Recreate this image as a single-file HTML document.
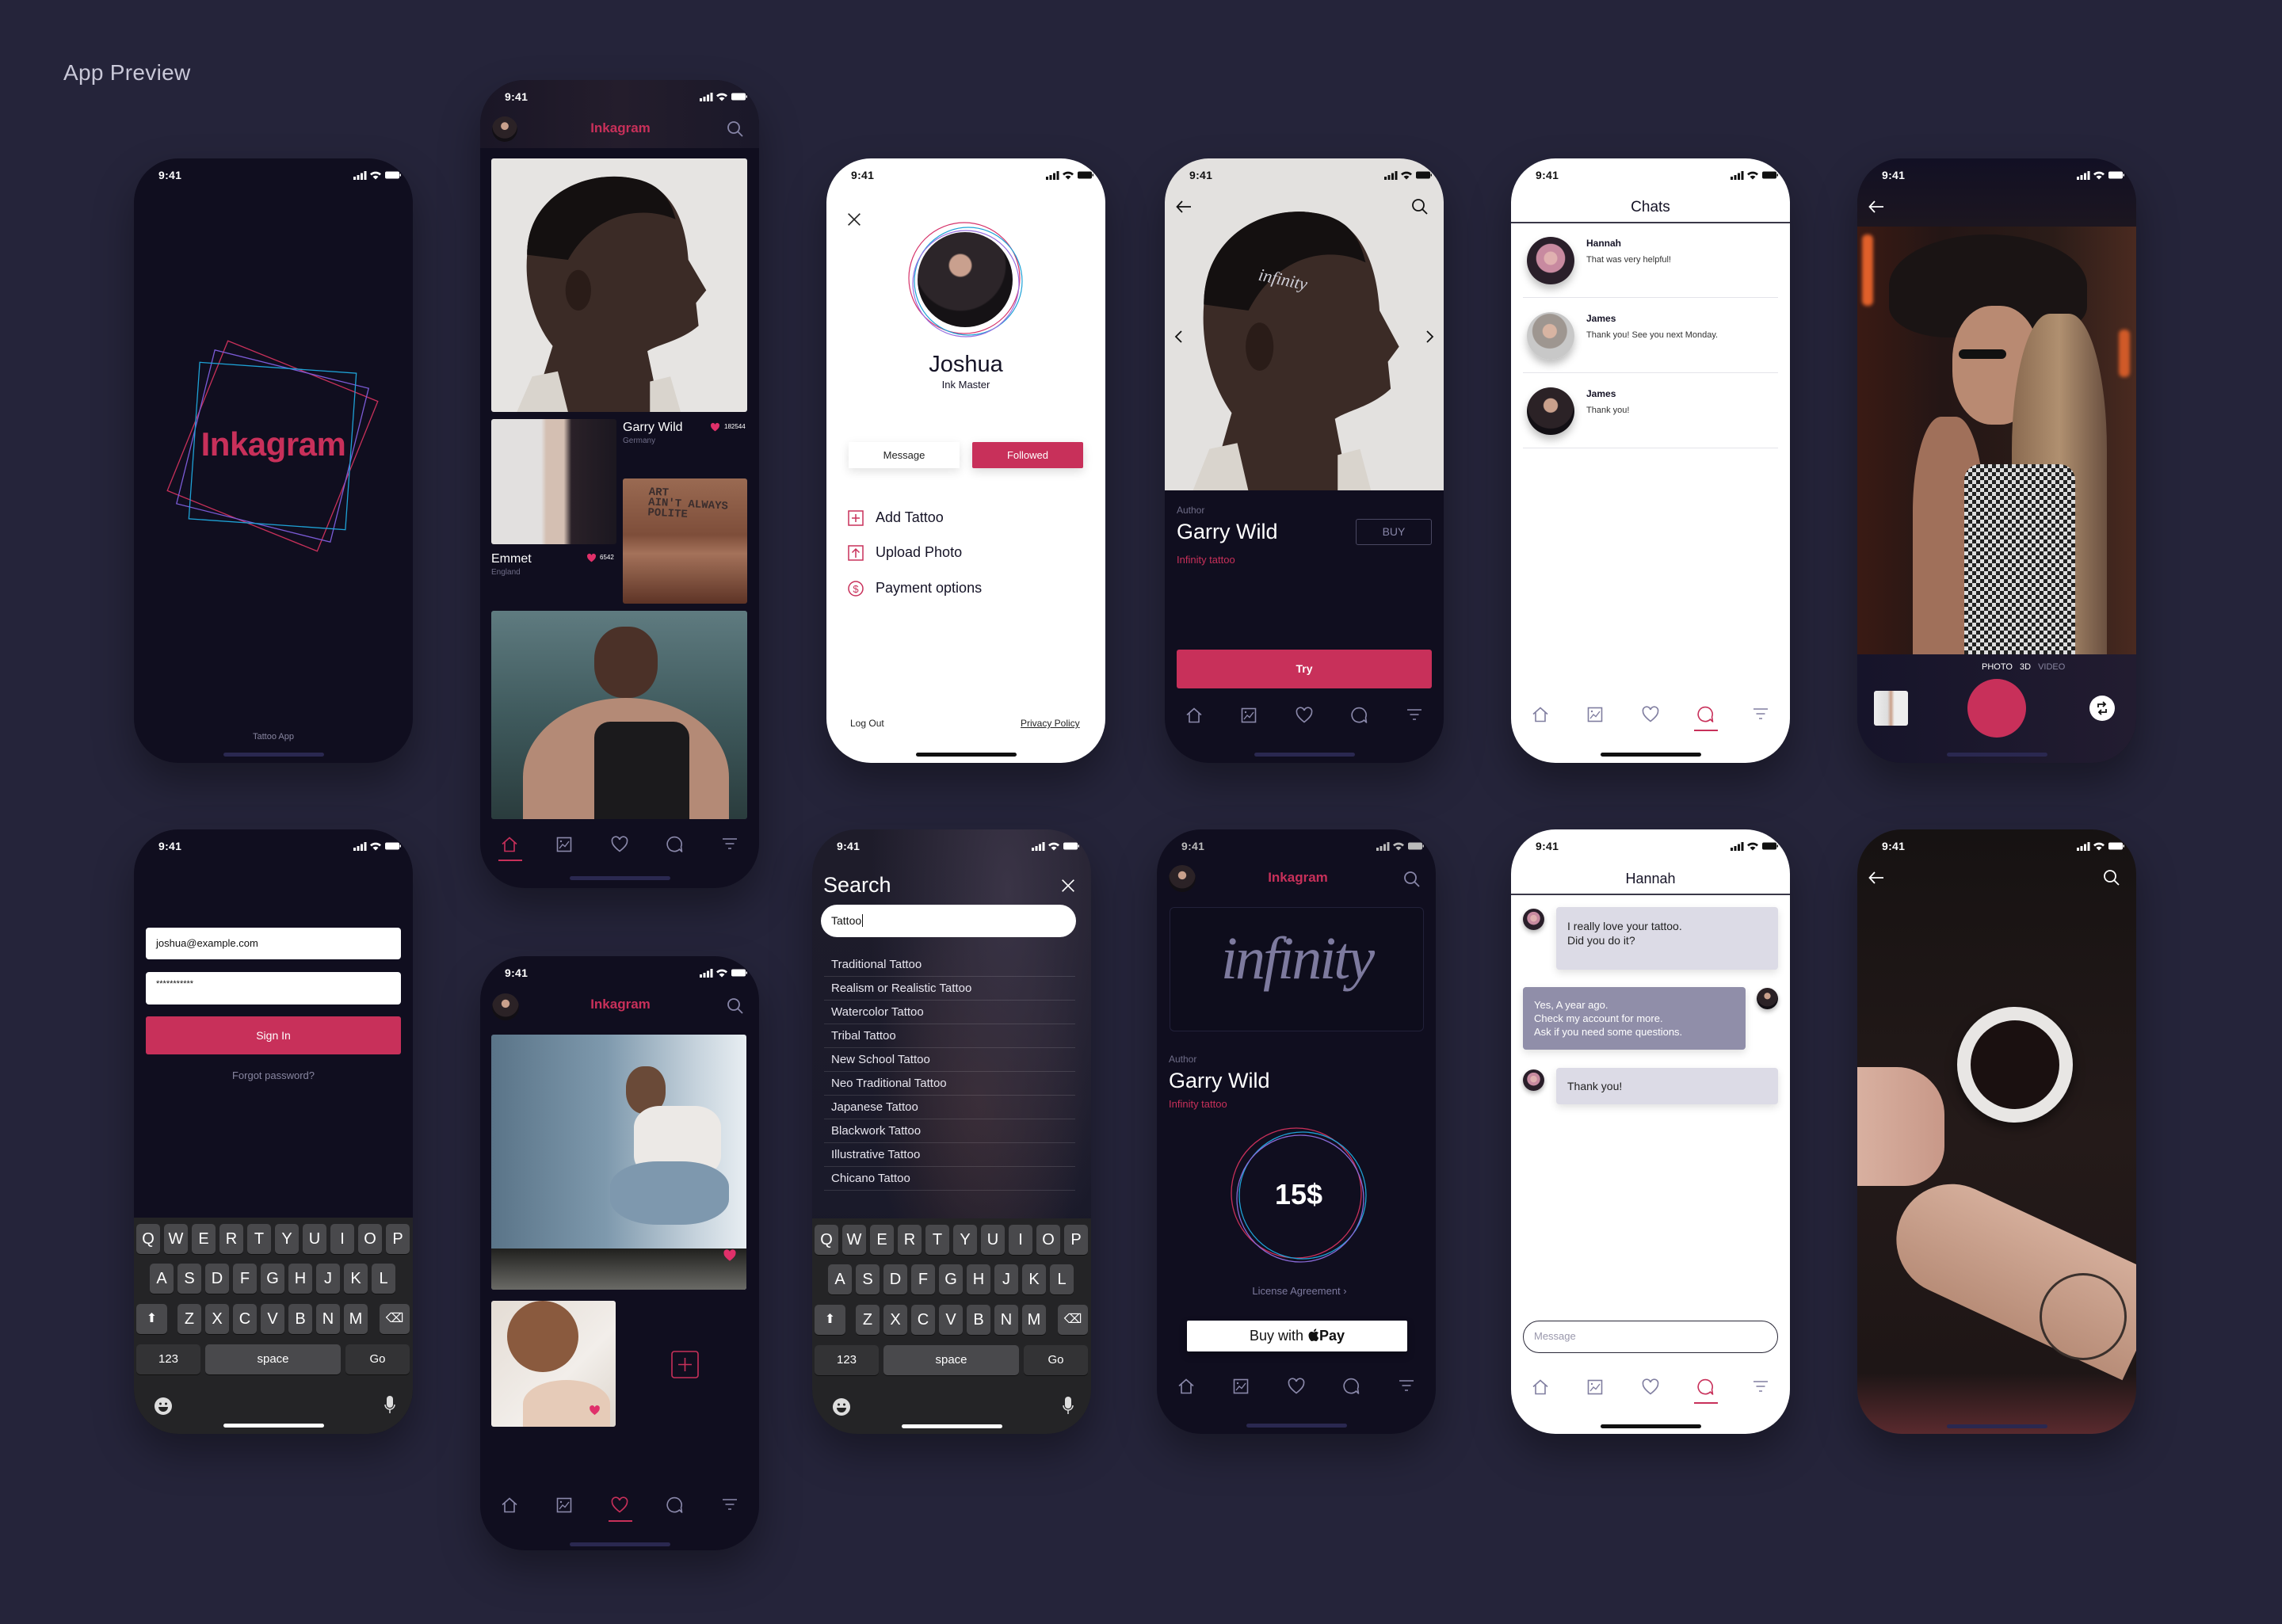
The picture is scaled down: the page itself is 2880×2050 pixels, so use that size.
<!DOCTYPE html>
<html><head><meta charset="utf-8">
<style>
*{margin:0;padding:0;box-sizing:border-box}
body{width:2880px;height:2050px;background:#25243a;font-family:"Liberation Sans",sans-serif;position:relative;overflow:hidden}
.ph{position:absolute;width:352px;height:763px;border-radius:56px;overflow:hidden;background:#100e1f;box-shadow:0 24px 50px rgba(0,0,0,.35)}
.a{position:absolute}
.st{position:absolute;left:31px;top:13px;font-size:14px;font-weight:bold;color:#fff;letter-spacing:.3px}
.st.dk{color:#111}
.sti{position:absolute;right:15px;top:15px;width:60px;height:12px}
.nav{position:absolute;left:0;width:352px;height:26px}
.nav svg{position:absolute;width:24px;height:24px;top:0}
.hi{position:absolute;left:113px;width:127px;height:5px;border-radius:3px;background:#2a2850}
.logo{color:#c8305a;font-weight:bold;font-size:17px;position:absolute;width:200px;text-align:center;left:77px}
.av{position:absolute;border-radius:50%;background:radial-gradient(circle at 50% 38%,#c9a08c 0 18%,#2b2226 20% 60%,#120f14 62%)}
.kb{position:absolute;left:0;width:352px;background:#242426}
.k{position:absolute;height:38px;border-radius:5px;background:#49494c;color:#fff;font-size:20px;text-align:center;line-height:38px;box-shadow:0 1px 0 #111}
.k.s{font-size:15px}
.li{position:absolute;left:15px;width:317px;height:30px;border-bottom:1px solid rgba(255,255,255,.12);color:#e8e6ef;font-size:15px;padding-left:9px;line-height:30px}
.bub{position:absolute;border-radius:4px;font-size:14px;line-height:18px;box-shadow:0 4px 10px rgba(0,0,0,.12)}
</style></head><body>
<svg width="0" height="0" style="position:absolute">
<defs>
<symbol id="sb" viewBox="0 0 60 12"><rect x="0" y="8" width="3" height="4" fill="currentColor"/><rect x="4.5" y="6" width="3" height="6" fill="currentColor"/><rect x="9" y="3.5" width="3" height="8.5" fill="currentColor"/><rect x="13.5" y="1" width="3" height="11" fill="currentColor"/><path d="M21 4.5 A10 10 0 0 1 35 4.5 L33 6.5 A7 7 0 0 0 23 6.5Z M24.5 8 A5 5 0 0 1 31.5 8 L28 11.5Z" fill="currentColor"/><rect x="40" y="1.5" width="18" height="9" rx="2" fill="currentColor"/><rect x="58.5" y="4.5" width="1.5" height="3" fill="currentColor"/></symbol>
<symbol id="home" viewBox="0 0 24 24"><path d="M3 11.5 L12 3.5 L21 11.5 M6 9 V20.5 H18 V9" fill="none" stroke="currentColor" stroke-width="1.6"/></symbol>
<symbol id="img" viewBox="0 0 24 24"><rect x="3.5" y="3.5" width="17" height="17" fill="none" stroke="currentColor" stroke-width="1.6"/><path d="M6 17 L10 12 L13 14.5 L18 8" fill="none" stroke="currentColor" stroke-width="1.4"/><circle cx="8" cy="8" r="1.2" fill="currentColor"/></symbol>
<symbol id="heart" viewBox="0 0 24 24"><path d="M12 20.5 C5 15 2.5 11.5 2.5 8 A4.8 4.8 0 0 1 12 6 A4.8 4.8 0 0 1 21.5 8 C21.5 11.5 19 15 12 20.5Z" fill="none" stroke="currentColor" stroke-width="1.6"/></symbol>
<symbol id="chat" viewBox="0 0 24 24"><path d="M18.5 18 A9 9 0 1 1 20.5 15 L21.5 21 Z" fill="none" stroke="currentColor" stroke-width="1.6" stroke-linejoin="round"/></symbol>
<symbol id="filt" viewBox="0 0 24 24"><path d="M3 5 H21 M6.5 11 H17.5 M10 17 H14" fill="none" stroke="currentColor" stroke-width="1.6"/></symbol>
<symbol id="srch" viewBox="0 0 24 24"><circle cx="10" cy="10" r="7" fill="none" stroke="currentColor" stroke-width="1.8"/><path d="M15 15 L21 21" stroke="currentColor" stroke-width="1.8"/></symbol>
<symbol id="back" viewBox="0 0 24 24"><path d="M21 12 H4 M10 5 L3.5 12 L10 19" fill="none" stroke="currentColor" stroke-width="1.8"/></symbol>
<symbol id="x" viewBox="0 0 24 24"><path d="M4 4 L20 20 M20 4 L4 20" stroke="currentColor" stroke-width="1.8"/></symbol>
<symbol id="hf" viewBox="0 0 24 24"><path d="M12 21 C5 15.5 2 12 2 8 A5 5 0 0 1 12 5.5 A5 5 0 0 1 22 8 C22 12 19 15.5 12 21Z" fill="currentColor"/></symbol>
<symbol id="emo" viewBox="0 0 24 24"><circle cx="12" cy="12" r="11" fill="#ddd"/><circle cx="8.5" cy="9" r="1.5" fill="#222"/><circle cx="15.5" cy="9" r="1.5" fill="#222"/><path d="M6 13 H18 A6 6 0 0 1 6 13Z" fill="#222"/></symbol>
<symbol id="man" viewBox="0 0 100 100" preserveAspectRatio="none"><path d="M14 38 C14 14 38 4 56 8 C70 11 76 24 77 40 L84 52 L80 57 L81 66 C74 72 66 73 61 76 L66 100 L16 100 L24 74 C16 64 13 50 14 38Z" fill="#3b2b26"/><path d="M14 38 C14 14 38 4 56 8 C66 10 70 16 72 24 C58 18 40 22 30 40 Z" fill="#141010"/><path d="M10 100 L16 86 L26 84 L30 100Z M62 100 L62 88 L70 86 L74 100Z" fill="#d9d4cd"/><ellipse cx="34" cy="52" rx="5" ry="8" fill="#2a1c18"/></symbol>
</defs></svg>

<div class="a" style="left:80px;top:76px;font-size:28px;color:#c9c8d8;letter-spacing:.3px">App Preview</div>

<!-- P1 splash -->
<div class="ph" style="left:169px;top:200px">
 <div class="st">9:41</div><svg class="sti" style="color:#fff"><use href="#sb"/></svg>
 <svg class="a" style="left:40px;top:228px" width="270" height="270" viewBox="0 0 270 270">
  <g fill="none" stroke-width="1.3">
   <rect x="33" y="33" width="204" height="204" stroke="#c8305a" transform="rotate(22 135 135)"/>
   <rect x="35" y="35" width="200" height="200" stroke="#7b5bd6" transform="rotate(14 135 135)"/>
   <rect x="36" y="36" width="198" height="198" stroke="#1ea2d6" transform="rotate(4 135 135)"/>
  </g></svg>
 <div class="a" style="left:0;width:352px;top:337px;text-align:center;font-size:42px;font-weight:bold;color:#c8305a;letter-spacing:-.5px">Inkagram</div>
 <div class="a" style="left:0;width:352px;top:724px;text-align:center;font-size:11px;color:#8886a0">Tattoo App</div>
 <div class="hi" style="top:750px"></div>
</div>

<!-- P2 feed -->
<div class="ph" style="left:606px;top:101px;height:1020px">
 <div class="a" style="left:0;top:0;width:352px;height:86px;background:linear-gradient(90deg,#1a1626,#241d2c 50%,#1a1829)"></div>
 <div class="st">9:41</div><svg class="sti" style="color:#fff"><use href="#sb"/></svg>
 <div class="av" style="left:15px;top:46px;width:32px;height:32px"></div>
 <div class="logo" style="top:51px">Inkagram</div>
 <svg class="a" style="left:310px;top:50px;width:24px;height:24px;color:#8886a8"><use href="#srch"/></svg>
 <div class="a" style="left:14px;top:99px;width:323px;height:320px;background:#e6e4e2;border-radius:3px;overflow:hidden"><svg style="width:100%;height:100%"><use href="#man"/></svg></div>
 <div class="a" style="left:14px;top:428px;width:158px;height:158px;background:linear-gradient(90deg,#e2e0df 0 40%,#d4bfb2 44% 58%,#2a2128 64%,#1b1720);border-radius:3px"></div>
 <div class="a" style="left:180px;top:430px;color:#fff;font-size:16px">Garry Wild</div>
 <div class="a" style="left:180px;top:450px;color:#6f6d88;font-size:10px">Germany</div>
 <svg class="a" style="left:290px;top:432px;width:13px;height:13px;color:#e0306a"><use href="#hf"/></svg>
 <div class="a" style="left:308px;top:433px;color:#fff;font-size:8px">182544</div>
 <div class="a" style="left:180px;top:503px;width:157px;height:158px;border-radius:3px;background:linear-gradient(180deg,#9a6a52,#7e4e3a 45%,#a4725a 60%,#5e3426);overflow:hidden">
  <div style="position:absolute;left:32px;top:14px;font:bold 14px 'Liberation Mono',monospace;color:#3a2d2d;line-height:13px;transform:rotate(3deg)">ART<br>AIN'T ALWAYS<br>POLITE</div></div>
 <div class="a" style="left:14px;top:596px;color:#fff;font-size:16px">Emmet</div>
 <div class="a" style="left:14px;top:616px;color:#6f6d88;font-size:10px">England</div>
 <svg class="a" style="left:134px;top:597px;width:13px;height:13px;color:#e0306a"><use href="#hf"/></svg>
 <div class="a" style="left:151px;top:598px;color:#fff;font-size:8px">6542</div>
 <div class="a" style="left:14px;top:670px;width:323px;height:263px;border-radius:3px;background:linear-gradient(180deg,#5f7b80,#3f5a5d 50%,#2a3c3d);overflow:hidden">
  <div style="position:absolute;left:130px;top:20px;width:80px;height:90px;border-radius:45%;background:#4b3128"></div>
  <div style="position:absolute;left:40px;top:110px;width:260px;height:200px;border-radius:50% 50% 0 0;background:#b48a76"></div>
  <div style="position:absolute;left:130px;top:140px;width:120px;height:130px;background:#1b1a1c;border-radius:20px 20px 0 0"></div>
 </div>
 <div class="nav" style="top:953px;color:#8b89ab">
  <svg style="left:25px;color:#c8305a"><use href="#home"/></svg><div class="a" style="left:23px;top:31px;width:30px;height:2px;background:#c8305a"></div>
  <svg style="left:94px"><use href="#img"/></svg><svg style="left:164px"><use href="#heart"/></svg><svg style="left:233px"><use href="#chat"/></svg><svg style="left:303px"><use href="#filt"/></svg>
 </div>
 <div class="hi" style="top:1005px"></div>
</div>

<!-- P3 profile -->
<div class="ph" style="left:1043px;top:200px;background:#fff">
 <div class="st dk">9:41</div><svg class="sti" style="color:#111"><use href="#sb"/></svg>
 <svg class="a" style="left:24px;top:66px;width:22px;height:22px;color:#222"><use href="#x"/></svg>
 <div class="a" style="left:115px;top:93px;width:120px;height:120px;border-radius:50%;background:radial-gradient(circle at 45% 35%,#c9a08e 0 13%,#2c2529 15% 55%,#151215 57%)"></div>
 <svg class="a" style="left:101px;top:79px" width="150" height="150"><g fill="none" stroke-width="1.2"><circle cx="73" cy="72" r="70" stroke="#d6336a"/><circle cx="78" cy="76" r="68" stroke="#1ea2d6"/><circle cx="75" cy="79" r="67" stroke="#9a70e0"/></g></svg>
 <div class="a" style="left:0;width:352px;top:244px;text-align:center;font-size:29px;color:#151326">Joshua</div>
 <div class="a" style="left:0;width:352px;top:278px;text-align:center;font-size:13px;color:#151326">Ink Master</div>
 <div class="a" style="left:28px;top:358px;width:140px;height:33px;background:#fff;box-shadow:0 4px 12px rgba(0,0,0,.12);text-align:center;line-height:33px;font-size:13px;color:#222">Message</div>
 <div class="a" style="left:184px;top:358px;width:140px;height:33px;background:#c8305a;border-radius:2px;box-shadow:0 4px 12px rgba(0,0,0,.15);text-align:center;line-height:33px;font-size:13px;color:#fff">Followed</div>
 <svg class="a" style="left:27px;top:444px" width="20" height="20"><rect x="1" y="1" width="18" height="18" fill="none" stroke="#c8305a" stroke-width="1.5"/><path d="M10 5 V15 M5 10 H15" stroke="#c8305a" stroke-width="1.5"/></svg>
 <div class="a" style="left:62px;top:443px;font-size:18px;color:#151326">Add Tattoo</div>
 <svg class="a" style="left:27px;top:488px" width="20" height="20"><rect x="1" y="1" width="18" height="18" fill="none" stroke="#c8305a" stroke-width="1.5"/><path d="M10 16 V5 M5.5 9.5 L10 5 L14.5 9.5" fill="none" stroke="#c8305a" stroke-width="1.5"/></svg>
 <div class="a" style="left:62px;top:487px;font-size:18px;color:#151326">Upload Photo</div>
 <svg class="a" style="left:27px;top:533px" width="20" height="20"><circle cx="10" cy="10" r="9" fill="none" stroke="#c8305a" stroke-width="1.5"/><text x="10" y="15" text-anchor="middle" font-size="13" fill="#c8305a" font-family="Liberation Sans">$</text></svg>
 <div class="a" style="left:62px;top:532px;font-size:18px;color:#151326">Payment options</div>
 <div class="a" style="left:30px;top:706px;font-size:12px;color:#222">Log Out</div>
 <div class="a" style="left:245px;top:706px;font-size:12px;color:#222;text-decoration:underline">Privacy Policy</div>
 <div class="hi" style="top:750px;background:#111"></div>
</div>

<!-- P4 detail -->
<div class="ph" style="left:1470px;top:200px">
 <div class="a" style="left:0;top:0;width:352px;height:419px;background:#e3e1df;overflow:hidden"><svg style="position:absolute;left:0;top:40px;width:352px;height:380px"><use href="#man"/></svg>
  <div class="a" style="left:118px;top:140px;font:italic 22px 'Liberation Serif',serif;color:#cfcfd8;transform:rotate(12deg)">infinity</div></div>
 <div class="st dk">9:41</div><svg class="sti" style="color:#111"><use href="#sb"/></svg>
 <svg class="a" style="left:12px;top:49px;width:24px;height:24px;color:#111"><use href="#back"/></svg>
 <svg class="a" style="left:310px;top:49px;width:24px;height:24px;color:#111"><use href="#srch"/></svg>
 <svg class="a" style="left:10px;top:215px" width="14" height="20"><path d="M11 3 L4 10 L11 17" fill="none" stroke="#111" stroke-width="1.8"/></svg>
 <svg class="a" style="left:328px;top:215px" width="14" height="20"><path d="M3 3 L10 10 L3 17" fill="none" stroke="#111" stroke-width="1.8"/></svg>
 <div class="a" style="left:15px;top:437px;font-size:12px;color:#6f6d88">Author</div>
 <div class="a" style="left:15px;top:456px;font-size:27px;color:#fff">Garry Wild</div>
 <div class="a" style="left:15px;top:499px;font-size:13px;color:#c8305a">Infinity tattoo</div>
 <div class="a" style="left:241px;top:455px;width:96px;height:33px;border:1.5px solid #4a4862;border-radius:3px;text-align:center;line-height:30px;font-size:14px;color:#8886a8">BUY</div>
 <div class="a" style="left:15px;top:620px;width:322px;height:49px;background:#c8305a;border-radius:3px;text-align:center;line-height:49px;font-size:14px;font-weight:bold;color:#fff">Try</div>
 <div class="nav" style="top:691px;color:#8b89ab">
  <svg style="left:25px"><use href="#home"/></svg><svg style="left:94px"><use href="#img"/></svg><svg style="left:164px"><use href="#heart"/></svg><svg style="left:233px"><use href="#chat"/></svg><svg style="left:303px"><use href="#filt"/></svg></div>
 <div class="hi" style="top:750px"></div>
</div>

<!-- P5 chats -->
<div class="ph" style="left:1907px;top:200px;background:#fff">
 <div class="st dk">9:41</div><svg class="sti" style="color:#111"><use href="#sb"/></svg>
 <div class="a" style="left:0;width:352px;top:51px;text-align:center;font-size:19px;color:#151326">Chats</div>
 <div class="a" style="left:0;top:80px;width:352px;height:1.5px;background:#3a3848"></div>
 <div class="av" style="left:20px;top:99px;width:60px;height:60px;background:radial-gradient(circle at 50% 45%,#e0b0b0 0 18%,#c88aa0 20% 40%,#2a1f2a 42%);box-shadow:0 6px 10px rgba(0,0,0,.25)"></div>
 <div class="a" style="left:95px;top:100px;font-size:12px;font-weight:bold;color:#151326">Hannah</div>
 <div class="a" style="left:95px;top:122px;font-size:11px;color:#333">That was very helpful!</div>
 <div class="a" style="left:15px;top:175px;width:322px;height:1px;background:#e4e4ea"></div>
 <div class="av" style="left:20px;top:194px;width:60px;height:60px;background:radial-gradient(circle at 48% 40%,#d8b4a2 0 18%,#9e9690 20% 45%,#c8c8c8 47%);box-shadow:0 6px 10px rgba(0,0,0,.25)"></div>
 <div class="a" style="left:95px;top:195px;font-size:12px;font-weight:bold;color:#151326">James</div>
 <div class="a" style="left:95px;top:217px;font-size:11px;color:#333">Thank you! See you next Monday.</div>
 <div class="a" style="left:15px;top:270px;width:322px;height:1px;background:#e4e4ea"></div>
 <div class="av" style="left:20px;top:289px;width:60px;height:60px;box-shadow:0 6px 10px rgba(0,0,0,.25)"></div>
 <div class="a" style="left:95px;top:290px;font-size:12px;font-weight:bold;color:#151326">James</div>
 <div class="a" style="left:95px;top:312px;font-size:11px;color:#333">Thank you!</div>
 <div class="a" style="left:15px;top:365px;width:322px;height:1px;background:#e4e4ea"></div>
 <div class="nav" style="top:690px;color:#807ea0">
  <svg style="left:25px"><use href="#home"/></svg><svg style="left:94px"><use href="#img"/></svg><svg style="left:164px"><use href="#heart"/></svg><svg style="left:233px;color:#c8305a"><use href="#chat"/></svg><div class="a" style="left:231px;top:31px;width:30px;height:2px;background:#c8305a"></div><svg style="left:303px"><use href="#filt"/></svg></div>
 <div class="hi" style="top:750px;background:#111"></div>
</div>

<!-- P6 camera -->
<div class="ph" style="left:2344px;top:200px;background:#16131f">
 <div class="a" style="left:0;top:0;width:352px;height:86px;background:linear-gradient(180deg,#121024,#1c1620)"></div>
 <div class="a" style="left:0;top:86px;width:352px;height:540px;background:linear-gradient(90deg,#3a1a14,#241615 30%,#2b1c18 70%,#4a2a20);overflow:hidden">
  <div style="position:absolute;left:6px;top:10px;width:14px;height:90px;background:#e0602a;border-radius:6px;filter:blur(2px)"></div>
  <div style="position:absolute;left:330px;top:130px;width:14px;height:60px;background:#d05a28;border-radius:6px;filter:blur(2px)"></div>
  <div style="position:absolute;left:40px;top:10px;width:250px;height:130px;border-radius:50% 50% 30% 30%;background:#1a1414"></div>
  <div style="position:absolute;left:120px;top:100px;width:110px;height:150px;border-radius:45%;background:#b98a72"></div>
  <div style="position:absolute;left:195px;top:110px;width:120px;height:430px;border-radius:40% 40% 0 0;background:linear-gradient(90deg,#8a6a50,#b09070,#6a5040)"></div>
  <div style="position:absolute;left:70px;top:240px;width:90px;height:300px;border-radius:40% 40% 0 0;background:#a0705a"></div>
  <div style="position:absolute;left:135px;top:300px;width:140px;height:240px;background:repeating-conic-gradient(#222 0 25%,#ddd 0 50%) 0 0/10px 10px;border-radius:20px 20px 0 0"></div>
  <div style="position:absolute;left:128px;top:155px;width:60px;height:12px;background:#111;border-radius:6px"></div>
 </div>
 <div class="st">9:41</div><svg class="sti" style="color:#fff"><use href="#sb"/></svg>
 <svg class="a" style="left:12px;top:49px;width:24px;height:24px;color:#fff"><use href="#back"/></svg>
 <div class="a" style="left:0;top:626px;width:352px;height:137px;background:linear-gradient(90deg,#16142a,#221c30)"></div>
 <div class="a" style="left:157px;top:636px;font-size:11px;color:#fff;word-spacing:6px">PHOTO 3D <span style="color:#8886a0">VIDEO</span></div>
 <div class="a" style="left:21px;top:672px;width:43px;height:44px;border-radius:3px;background:linear-gradient(90deg,#eee,#ddd 40%,#c9a08a 50%,#eee 60%)"></div>
 <div class="a" style="left:139px;top:657px;width:74px;height:74px;border-radius:50%;background:#c8305a"></div>
 <div class="a" style="left:293px;top:678px;width:32px;height:32px;border-radius:50%;background:#fff"></div>
 <svg class="a" style="left:299px;top:684px" width="20" height="20"><path d="M5 9 V5 H14 M11 2 L14 5 L11 8 M15 11 V15 H6 M9 18 L6 15 L9 12" fill="none" stroke="#111" stroke-width="1.8"/></svg>
 <div class="hi" style="top:750px"></div>
</div>

<!-- P7 login -->
<div class="ph" style="left:169px;top:1047px">
 <div class="st">9:41</div><svg class="sti" style="color:#fff"><use href="#sb"/></svg>
 <div class="a" style="left:15px;top:124px;width:322px;height:40px;background:#fff;border-radius:4px;font-size:13px;color:#111;line-height:40px;padding-left:13px">joshua@example.com</div>
 <div class="a" style="left:15px;top:180px;width:322px;height:41px;background:#fff;border-radius:4px;font-size:11px;color:#111;line-height:30px;padding-left:13px">***********</div>
 <div class="a" style="left:15px;top:236px;width:322px;height:48px;background:#c8305a;border-radius:3px;text-align:center;line-height:48px;font-size:14px;color:#fff">Sign In</div>
 <div class="a" style="left:0;width:352px;top:303px;text-align:center;font-size:13px;color:#8886a0">Forgot password?</div>
 <div class="kb" style="top:490px;height:273px">
  <div class="k" style="left:3px;top:8px;width:30px">Q</div><div class="k" style="left:38px;top:8px;width:30px">W</div><div class="k" style="left:73px;top:8px;width:30px">E</div><div class="k" style="left:108px;top:8px;width:30px">R</div><div class="k" style="left:143px;top:8px;width:30px">T</div><div class="k" style="left:178px;top:8px;width:30px">Y</div><div class="k" style="left:213px;top:8px;width:30px">U</div><div class="k" style="left:248px;top:8px;width:30px">I</div><div class="k" style="left:283px;top:8px;width:30px">O</div><div class="k" style="left:318px;top:8px;width:30px">P</div>
  <div class="k" style="left:20px;top:58px;width:30px">A</div><div class="k" style="left:55px;top:58px;width:30px">S</div><div class="k" style="left:90px;top:58px;width:30px">D</div><div class="k" style="left:125px;top:58px;width:30px">F</div><div class="k" style="left:160px;top:58px;width:30px">G</div><div class="k" style="left:195px;top:58px;width:30px">H</div><div class="k" style="left:230px;top:58px;width:30px">J</div><div class="k" style="left:265px;top:58px;width:30px">K</div><div class="k" style="left:300px;top:58px;width:30px">L</div>
  <div class="k" style="left:3px;top:109px;width:39px;font-size:16px">⬆</div><div class="k" style="left:55px;top:109px;width:30px">Z</div><div class="k" style="left:90px;top:109px;width:30px">X</div><div class="k" style="left:125px;top:109px;width:30px">C</div><div class="k" style="left:160px;top:109px;width:30px">V</div><div class="k" style="left:195px;top:109px;width:30px">B</div><div class="k" style="left:230px;top:109px;width:30px">N</div><div class="k" style="left:265px;top:109px;width:30px">M</div><div class="k" style="left:310px;top:109px;width:38px;font-size:16px">⌫</div>
  <div class="k s" style="left:3px;top:160px;width:81px;background:#333335">123</div><div class="k s" style="left:90px;top:160px;width:171px">space</div><div class="k s" style="left:267px;top:160px;width:81px;background:#333335">Go</div>
  <svg class="a" style="left:25px;top:226px;width:24px;height:24px"><use href="#emo"/></svg>
  <svg class="a" style="left:316px;top:224px" width="14" height="26"><rect x="3" y="1" width="8" height="15" rx="4" fill="#ddd"/><path d="M1 12 A6 6 0 0 0 13 12 M7 18 V23" fill="none" stroke="#ddd" stroke-width="1.5"/></svg>
 </div>
 <div class="hi" style="top:750px;background:#fff"></div>
</div>

<!-- P8 feed 2 -->
<div class="ph" style="left:606px;top:1207px;height:750px">
 <div class="st">9:41</div><svg class="sti" style="color:#fff"><use href="#sb"/></svg>
 <div class="av" style="left:15px;top:47px;width:34px;height:34px"></div>
 <div class="logo" style="top:51px">Inkagram</div>
 <svg class="a" style="left:310px;top:51px;width:24px;height:24px;color:#8886a8"><use href="#srch"/></svg>
 <div class="a" style="left:14px;top:99px;width:322px;height:322px;border-radius:3px;overflow:hidden;background:linear-gradient(90deg,#5a7488,#7e99ad 45%,#c5d2dc 80%,#e8eef2)">
  <div style="position:absolute;left:170px;top:40px;width:50px;height:60px;border-radius:45%;background:#6a4a38"></div>
  <div style="position:absolute;left:180px;top:90px;width:110px;height:90px;border-radius:30%;background:#ece9e6"></div>
  <div style="position:absolute;left:150px;top:160px;width:150px;height:80px;border-radius:40%;background:#7e98ae"></div>
  <div style="position:absolute;left:0;top:270px;width:322px;height:52px;background:linear-gradient(180deg,#20201e,#6a6a66)"></div>
  <svg style="position:absolute;left:292px;top:270px;width:18px;height:18px;color:#e0306a"><use href="#hf"/></svg>
 </div>
 <div class="a" style="left:14px;top:435px;width:157px;height:159px;border-radius:3px;overflow:hidden;background:linear-gradient(135deg,#e4dcd4,#f2eeea 60%,#ddd5cc)">
  <div style="position:absolute;left:20px;top:0;width:90px;height:90px;border-radius:50%;background:#8a5a3e"></div>
  <div style="position:absolute;left:40px;top:100px;width:110px;height:60px;border-radius:50% 50% 0 0;background:#e6cbb8"></div>
  <svg style="position:absolute;left:123px;top:131px;width:15px;height:15px;color:#e0306a"><use href="#hf"/></svg>
 </div>
 <svg class="a" style="left:241px;top:498px" width="35" height="35"><rect x="1" y="1" width="33" height="33" rx="3" fill="none" stroke="#c8305a" stroke-width="1.6"/><path d="M17.5 9 V26 M9 17.5 H26" stroke="#c8305a" stroke-width="1.6"/></svg>
 <div class="nav" style="top:681px;color:#8b89ab">
  <svg style="left:25px"><use href="#home"/></svg><svg style="left:94px"><use href="#img"/></svg><svg style="left:164px;color:#c8305a"><use href="#heart"/></svg><div class="a" style="left:162px;top:31px;width:30px;height:2px;background:#c8305a"></div><svg style="left:233px"><use href="#chat"/></svg><svg style="left:303px"><use href="#filt"/></svg></div>
 <div class="hi" style="top:740px"></div>
</div>

<!-- P9 search -->
<div class="ph" style="left:1025px;top:1047px;background:radial-gradient(ellipse at 70% 10%,#3a3446,transparent 50%),radial-gradient(ellipse at 60% 45%,#3a2a30,transparent 45%),linear-gradient(180deg,#1e1c2a,#1a1a2a 60%,#141423)">
 <div class="st">9:41</div><svg class="sti" style="color:#fff"><use href="#sb"/></svg>
 <div class="a" style="left:14px;top:55px;font-size:27px;color:#fff">Search</div>
 <svg class="a" style="left:312px;top:60px;width:22px;height:22px;color:#fff"><use href="#x"/></svg>
 <div class="a" style="left:11px;top:95px;width:322px;height:41px;background:#fff;border-radius:21px;font-size:14px;color:#111;line-height:41px;padding-left:13px">Tattoo<span style="border-left:1px solid #111;margin-left:1px"></span></div>
 <div class="li" style="top:156px">Traditional Tattoo</div><div class="li" style="top:186px">Realism or Realistic Tattoo</div><div class="li" style="top:216px">Watercolor Tattoo</div><div class="li" style="top:246px">Tribal Tattoo</div><div class="li" style="top:276px">New School Tattoo</div><div class="li" style="top:306px">Neo Traditional Tattoo</div><div class="li" style="top:336px">Japanese Tattoo</div><div class="li" style="top:366px">Blackwork Tattoo</div><div class="li" style="top:396px">Illustrative Tattoo</div><div class="li" style="top:426px">Chicano Tattoo</div>
 <div class="kb" style="top:491px;height:272px">
  <div class="k" style="left:3px;top:8px;width:30px">Q</div><div class="k" style="left:38px;top:8px;width:30px">W</div><div class="k" style="left:73px;top:8px;width:30px">E</div><div class="k" style="left:108px;top:8px;width:30px">R</div><div class="k" style="left:143px;top:8px;width:30px">T</div><div class="k" style="left:178px;top:8px;width:30px">Y</div><div class="k" style="left:213px;top:8px;width:30px">U</div><div class="k" style="left:248px;top:8px;width:30px">I</div><div class="k" style="left:283px;top:8px;width:30px">O</div><div class="k" style="left:318px;top:8px;width:30px">P</div>
  <div class="k" style="left:20px;top:58px;width:30px">A</div><div class="k" style="left:55px;top:58px;width:30px">S</div><div class="k" style="left:90px;top:58px;width:30px">D</div><div class="k" style="left:125px;top:58px;width:30px">F</div><div class="k" style="left:160px;top:58px;width:30px">G</div><div class="k" style="left:195px;top:58px;width:30px">H</div><div class="k" style="left:230px;top:58px;width:30px">J</div><div class="k" style="left:265px;top:58px;width:30px">K</div><div class="k" style="left:300px;top:58px;width:30px">L</div>
  <div class="k" style="left:3px;top:109px;width:39px;font-size:16px">⬆</div><div class="k" style="left:55px;top:109px;width:30px">Z</div><div class="k" style="left:90px;top:109px;width:30px">X</div><div class="k" style="left:125px;top:109px;width:30px">C</div><div class="k" style="left:160px;top:109px;width:30px">V</div><div class="k" style="left:195px;top:109px;width:30px">B</div><div class="k" style="left:230px;top:109px;width:30px">N</div><div class="k" style="left:265px;top:109px;width:30px">M</div><div class="k" style="left:310px;top:109px;width:38px;font-size:16px">⌫</div>
  <div class="k s" style="left:3px;top:160px;width:81px;background:#333335">123</div><div class="k s" style="left:90px;top:160px;width:171px">space</div><div class="k s" style="left:267px;top:160px;width:81px;background:#333335">Go</div>
  <svg class="a" style="left:25px;top:226px;width:24px;height:24px"><use href="#emo"/></svg>
  <svg class="a" style="left:316px;top:224px" width="14" height="26"><rect x="3" y="1" width="8" height="15" rx="4" fill="#ddd"/><path d="M1 12 A6 6 0 0 0 13 12 M7 18 V23" fill="none" stroke="#ddd" stroke-width="1.5"/></svg>
 </div>
 <div class="hi" style="top:751px;background:#fff"></div>
</div>

<!-- P10 buy -->
<div class="ph" style="left:1460px;top:1047px">
 <div class="st" style="color:#bbb">9:41</div><svg class="sti" style="color:#bbb"><use href="#sb"/></svg>
 <div class="av" style="left:15px;top:45px;width:34px;height:34px"></div>
 <div class="logo" style="top:51px;left:78px">Inkagram</div>
 <svg class="a" style="left:310px;top:51px;width:24px;height:24px;color:#8886a8"><use href="#srch"/></svg>
 <div class="a" style="left:16px;top:98px;width:321px;height:157px;border:1.5px solid #22213a;border-radius:6px;background:#0e0d1c"></div>
 <div class="a" style="left:16px;top:120px;width:321px;text-align:center;font:italic 76px 'Liberation Serif',serif;color:#7d7a9e;letter-spacing:-3px">infinity</div>
 <div class="a" style="left:15px;top:283px;font-size:12px;color:#6f6d88">Author</div>
 <div class="a" style="left:15px;top:302px;font-size:27px;color:#fff">Garry Wild</div>
 <div class="a" style="left:15px;top:339px;font-size:13px;color:#c8305a">Infinity tattoo</div>
 <svg class="a" style="left:90px;top:373px" width="180" height="180"><g fill="none" stroke-width="1.3"><circle cx="86" cy="86" r="82" stroke="#c8305a"/><circle cx="94" cy="89" r="80" stroke="#1ea2d6"/><circle cx="91" cy="93" r="80" stroke="#8a6ad8"/></g></svg>
 <div class="a" style="left:0;width:352px;top:440px;text-align:center;font-size:36px;font-weight:bold;color:#fff;padding-left:6px">15$</div>
 <div class="a" style="left:0;width:352px;top:575px;text-align:center;font-size:13px;color:#7d7a9e;padding-left:8px">License Agreement ›</div>
 <div class="a" style="left:38px;top:620px;width:278px;height:39px;background:#fff;border-radius:2px;text-align:center;line-height:39px;font-size:18px;color:#111;box-shadow:0 4px 10px rgba(0,0,0,.3)">Buy with <svg width="15" height="18" viewBox="0 0 15 18" style="vertical-align:-2px"><path d="M12.3 9.6c0-2 1.6-3 1.7-3-1-1.4-2.4-1.6-2.9-1.6-1.2-.1-2.4.7-3 .7s-1.6-.7-2.6-.7C4.100 5 2.900 5.800 2.200 7c-1.400 2.400-.400 6 1 8 .7 1 1.500 2 2.500 2s1.400-.6 2.600-.6 1.500.6 2.600.6 1.700-1 2.300-2c.7-1.100 1-2.200 1-2.300 0 0-2-.8-1.900-3.100zM10.400 3.700c.5-.7.900-1.600.8-2.500-.8 0-1.800.5-2.300 1.200-.5.600-1 1.500-.8 2.400.9.100 1.800-.4 2.300-1.100z" fill="#111"/></svg><b>Pay</b></div>
 <div class="nav" style="top:691px;color:#8b89ab">
  <svg style="left:25px"><use href="#home"/></svg><svg style="left:94px"><use href="#img"/></svg><svg style="left:164px"><use href="#heart"/></svg><svg style="left:233px"><use href="#chat"/></svg><svg style="left:303px"><use href="#filt"/></svg></div>
 <div class="hi" style="top:750px"></div>
</div>

<!-- P11 chat hannah -->
<div class="ph" style="left:1907px;top:1047px;background:#fff">
 <div class="st dk">9:41</div><svg class="sti" style="color:#111"><use href="#sb"/></svg>
 <div class="a" style="left:0;width:352px;top:52px;text-align:center;font-size:18px;color:#151326">Hannah</div>
 <div class="a" style="left:0;top:81px;width:352px;height:1.5px;background:#3a3848"></div>
 <div class="av" style="left:15px;top:100px;width:27px;height:27px;background:radial-gradient(circle at 50% 45%,#e0b0b0 0 20%,#c88aa0 22% 40%,#2a1f2a 42%);box-shadow:0 3px 6px rgba(0,0,0,.3)"></div>
 <div class="bub" style="left:57px;top:98px;width:280px;height:79px;background:#dcdbe6;color:#222;padding:15px 14px">I really love your tattoo.<br>Did you do it?</div>
 <div class="bub" style="left:15px;top:199px;width:281px;height:79px;background:#908ea9;color:#fff;padding:14px 14px;font-size:13px;line-height:17px">Yes, A year ago.<br>Check my account for more.<br>Ask if you need some questions.</div>
 <div class="av" style="left:310px;top:200px;width:27px;height:27px;box-shadow:0 3px 6px rgba(0,0,0,.3)"></div>
 <div class="av" style="left:15px;top:303px;width:27px;height:27px;background:radial-gradient(circle at 50% 45%,#e0b0b0 0 20%,#c88aa0 22% 40%,#2a1f2a 42%);box-shadow:0 3px 6px rgba(0,0,0,.3)"></div>
 <div class="bub" style="left:57px;top:301px;width:280px;height:46px;background:#dcdbe6;color:#222;padding:14px 14px">Thank you!</div>
 <div class="a" style="left:15px;top:620px;width:322px;height:41px;border:1.5px solid #2a2838;border-radius:21px;font-size:13px;color:#9a98ac;line-height:38px;padding-left:13px">Message</div>
 <div class="nav" style="top:692px;color:#807ea0">
  <svg style="left:25px"><use href="#home"/></svg><svg style="left:94px"><use href="#img"/></svg><svg style="left:164px"><use href="#heart"/></svg><svg style="left:233px;color:#c8305a"><use href="#chat"/></svg><div class="a" style="left:231px;top:31px;width:30px;height:2px;background:#c8305a"></div><svg style="left:303px"><use href="#filt"/></svg></div>
 <div class="hi" style="top:751px;background:#111"></div>
</div>

<!-- P12 coffee -->
<div class="ph" style="left:2344px;top:1047px;background:linear-gradient(180deg,#161212,#241a19 50%,#1e1616 90%,#5a2a2e)">
 <div class="a" style="left:0;top:300px;width:110px;height:150px;border-radius:0 60px 50px 0;background:linear-gradient(90deg,#d8b0a0,#c89888)"></div>
 <div class="a" style="left:126px;top:224px;width:146px;height:146px;border-radius:50%;background:#e8e6e4;box-shadow:0 6px 14px rgba(0,0,0,.5)"></div>
 <div class="a" style="left:143px;top:241px;width:112px;height:112px;border-radius:50%;background:#1a1010"></div>
 <div class="a" style="left:40px;top:490px;width:340px;height:140px;border-radius:70px 0 0 70px;background:linear-gradient(180deg,#d4ad9a,#b88d78);transform:rotate(25deg)"></div>
 <div class="a" style="left:230px;top:560px;width:110px;height:110px;border-radius:50%;border:3px solid #3a302c"></div>
 <div class="st">9:41</div><svg class="sti" style="color:#fff"><use href="#sb"/></svg>
 <svg class="a" style="left:12px;top:49px;width:24px;height:24px;color:#fff"><use href="#back"/></svg>
 <svg class="a" style="left:309px;top:49px;width:24px;height:24px;color:#fff"><use href="#srch"/></svg>
 <div class="hi" style="top:751px"></div>
</div>
</body></html>
